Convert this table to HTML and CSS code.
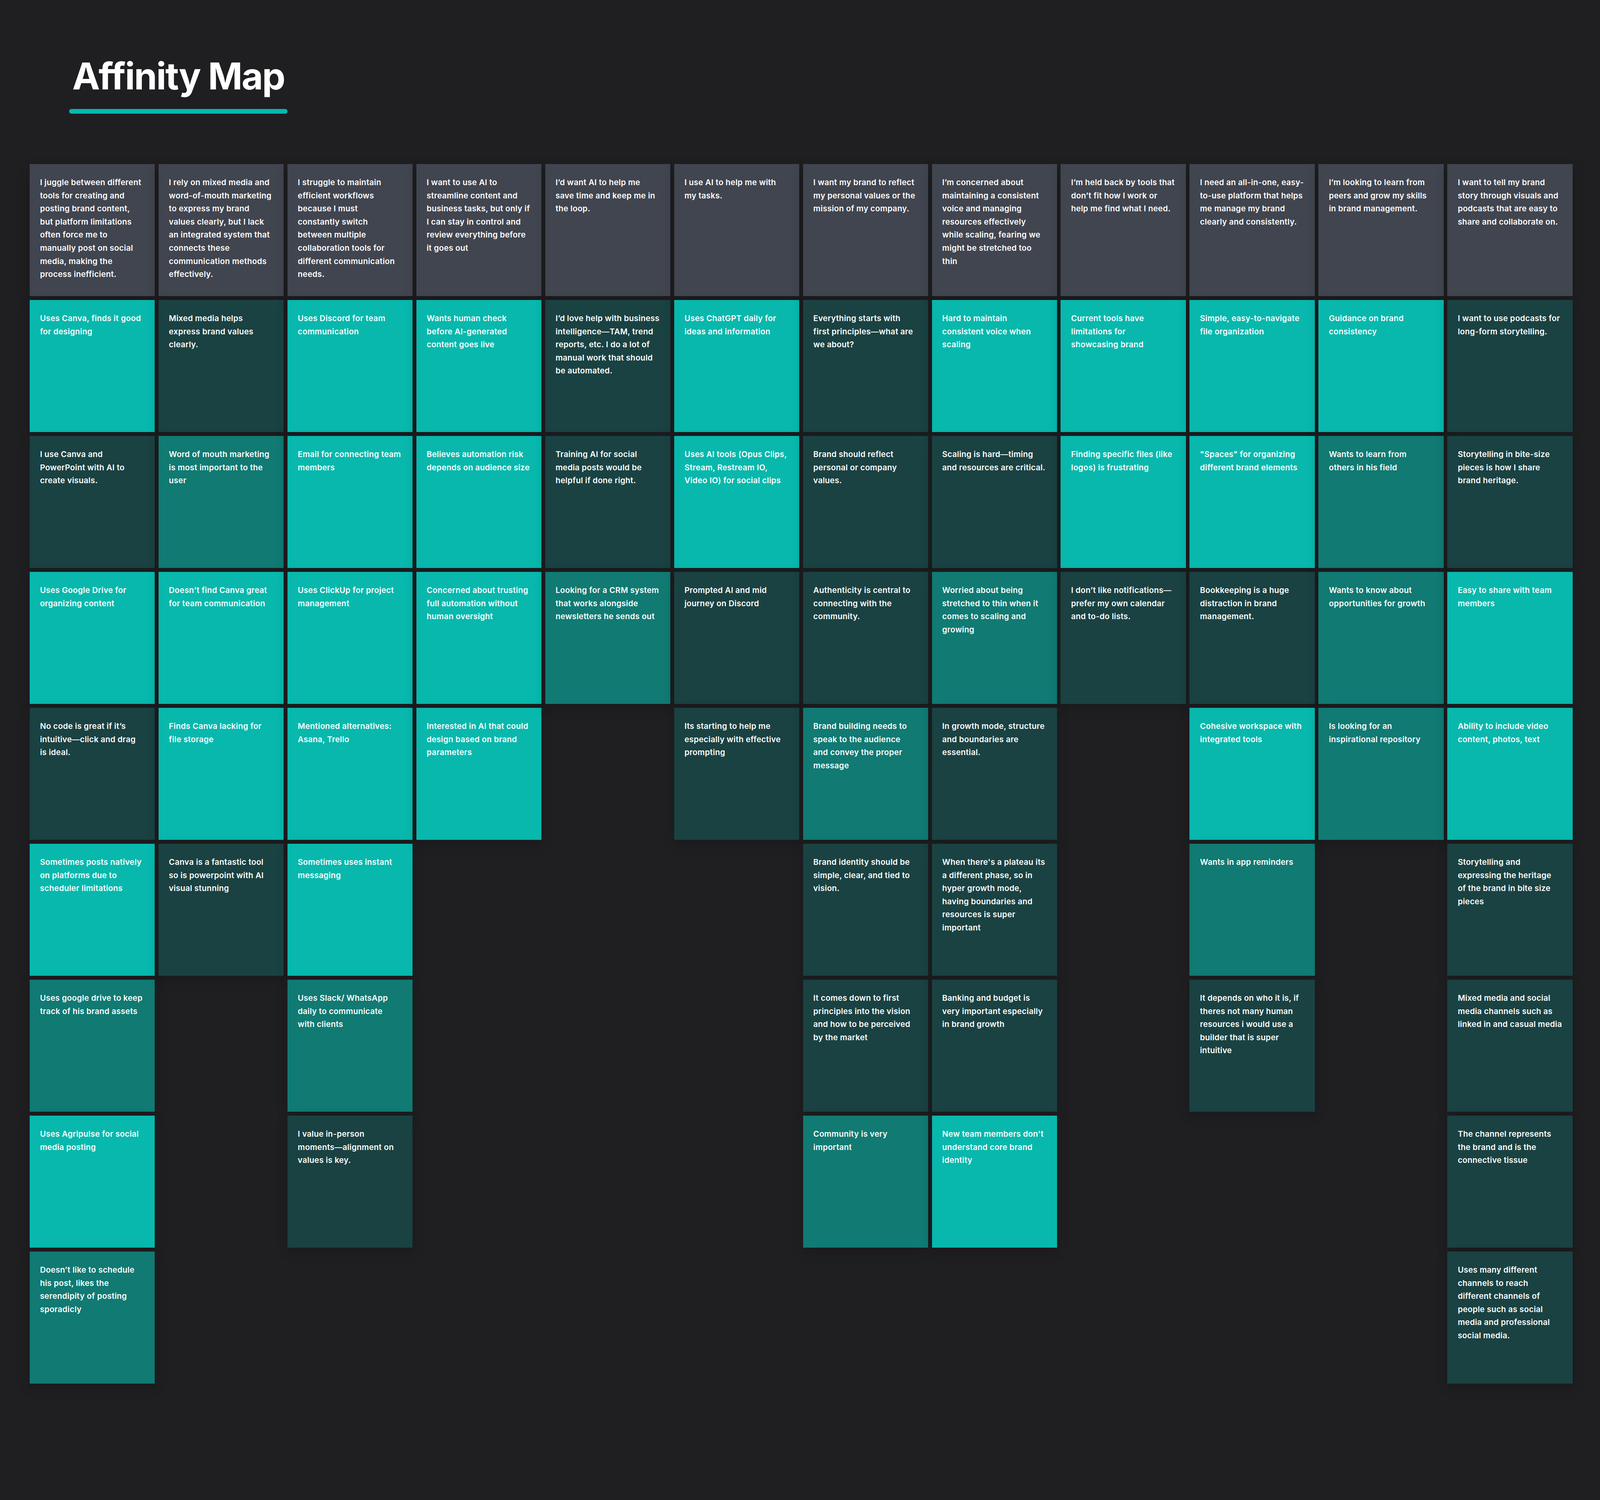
FILE: index.html
```html
<!DOCTYPE html>
<html lang="en">
<head>
<meta charset="utf-8">
<title>Affinity Map</title>
<link rel="stylesheet" href="styles.css">
</head>
<body>
<header class="page-header">
  <h1 class="title">Affinity Map</h1>
  <div class="title-rule"></div>
</header>
<main class="board">
  <section class="column">
    <div class="card head">I juggle between different<br>tools for creating and<br>posting brand content,<br>but platform limitations<br>often force me to<br>manually post on social<br>media, making the<br>process inefficient.</div>
    <div class="card bright">Uses Canva, finds it good<br>for designing</div>
    <div class="card dark">I use Canva and<br>PowerPoint with AI to<br>create visuals.</div>
    <div class="card bright">Uses Google Drive for<br>organizing content</div>
    <div class="card dark">No code is great if it’s<br>intuitive—click and drag<br>is ideal.</div>
    <div class="card bright">Sometimes posts natively<br>on platforms due to<br>scheduler limitations</div>
    <div class="card mid">Uses google drive to keep<br>track of his brand assets</div>
    <div class="card bright">Uses Agripulse for social<br>media posting</div>
    <div class="card mid">Doesn’t like to schedule<br>his post, likes the<br>serendipity of posting<br>sporadicly</div>
  </section>
  <section class="column">
    <div class="card head">I rely on mixed media and<br>word-of-mouth marketing<br>to express my brand<br>values clearly, but I lack<br>an integrated system that<br>connects these<br>communication methods<br>effectively.</div>
    <div class="card dark">Mixed media helps<br>express brand values<br>clearly.</div>
    <div class="card mid">Word of mouth marketing<br>is most important to the<br>user</div>
    <div class="card bright">Doesn't find Canva great<br>for team communication</div>
    <div class="card bright">Finds Canva lacking for<br>file storage</div>
    <div class="card dark">Canva is a fantastic tool<br>so is powerpoint with AI<br>visual stunning</div>
  </section>
  <section class="column">
    <div class="card head">I struggle to maintain<br>efficient workflows<br>because I must<br>constantly switch<br>between multiple<br>collaboration tools for<br>different communication<br>needs.</div>
    <div class="card bright">Uses Discord for team<br>communication</div>
    <div class="card bright">Email for connecting team<br>members</div>
    <div class="card bright">Uses ClickUp for project<br>management</div>
    <div class="card bright">Mentioned alternatives:<br>Asana, Trello</div>
    <div class="card bright">Sometimes uses instant<br>messaging</div>
    <div class="card mid">Uses Slack/ WhatsApp<br>daily to communicate<br>with clients</div>
    <div class="card dark">I value in-person<br>moments—alignment on<br>values is key.</div>
  </section>
  <section class="column">
    <div class="card head">I want to use AI to<br>streamline content and<br>business tasks, but only if<br>I can stay in control and<br>review everything before<br>it goes out</div>
    <div class="card bright">Wants human check<br>before AI-generated<br>content goes live</div>
    <div class="card bright">Believes automation risk<br>depends on audience size</div>
    <div class="card bright">Concerned about trusting<br>full automation without<br>human oversight</div>
    <div class="card bright">Interested in AI that could<br>design based on brand<br>parameters</div>
  </section>
  <section class="column">
    <div class="card head">I’d want AI to help me<br>save time and keep me in<br>the loop.</div>
    <div class="card dark">I’d love help with business<br>intelligence—TAM, trend<br>reports, etc. I do a lot of<br>manual work that should<br>be automated.</div>
    <div class="card dark">Training AI for social<br>media posts would be<br>helpful if done right.</div>
    <div class="card mid">Looking for a CRM system<br>that works alongside<br>newsletters he sends out</div>
  </section>
  <section class="column">
    <div class="card head">I use AI to help me with<br>my tasks.</div>
    <div class="card bright">Uses ChatGPT daily for<br>ideas and information</div>
    <div class="card bright">Uses AI tools (Opus Clips,<br>Stream, Restream IO,<br>Video IO) for social clips</div>
    <div class="card dark">Prompted AI and mid<br>journey on Discord</div>
    <div class="card dark">Its starting to help me<br>especially with effective<br>prompting</div>
  </section>
  <section class="column">
    <div class="card head">I want my brand to reflect<br>my personal values or the<br>mission of my company.</div>
    <div class="card dark">Everything starts with<br>first principles—what are<br>we about?</div>
    <div class="card dark">Brand should reflect<br>personal or company<br>values.</div>
    <div class="card dark">Authenticity is central to<br>connecting with the<br>community.</div>
    <div class="card mid">Brand building needs to<br>speak to the audience<br>and convey the proper<br>message</div>
    <div class="card dark">Brand identity should be<br>simple, clear, and tied to<br>vision.</div>
    <div class="card dark">It comes down to first<br>principles into the vision<br>and how to be perceived<br>by the market</div>
    <div class="card mid">Community is very<br>important</div>
  </section>
  <section class="column">
    <div class="card head">I’m concerned about<br>maintaining a consistent<br>voice and managing<br>resources effectively<br>while scaling, fearing we<br>might be stretched too<br>thin</div>
    <div class="card bright">Hard to maintain<br>consistent voice when<br>scaling</div>
    <div class="card dark">Scaling is hard—timing<br>and resources are critical.</div>
    <div class="card mid">Worried about being<br>stretched to thin when it<br>comes to scaling and<br>growing</div>
    <div class="card dark">In growth mode, structure<br>and boundaries are<br>essential.</div>
    <div class="card dark">When there's a plateau its<br>a different phase, so in<br>hyper growth mode,<br>having boundaries and<br>resources is super<br>important</div>
    <div class="card dark">Banking and budget is<br>very important especially<br>in brand growth</div>
    <div class="card bright">New team members don't<br>understand core brand<br>identity</div>
  </section>
  <section class="column">
    <div class="card head">I’m held back by tools that<br>don’t fit how I work or<br>help me find what I need.</div>
    <div class="card bright">Current tools have<br>limitations for<br>showcasing brand</div>
    <div class="card bright">Finding specific files (like<br>logos) is frustrating</div>
    <div class="card dark">I don’t like notifications—<br>prefer my own calendar<br>and to-do lists.</div>
  </section>
  <section class="column">
    <div class="card head">I need an all-in-one, easy-<br>to-use platform that helps<br>me manage my brand<br>clearly and consistently.</div>
    <div class="card bright">Simple, easy-to-navigate<br>file organization</div>
    <div class="card bright">"Spaces" for organizing<br>different brand elements</div>
    <div class="card dark">Bookkeeping is a huge<br>distraction in brand<br>management.</div>
    <div class="card bright">Cohesive workspace with<br>integrated tools</div>
    <div class="card mid">Wants in app reminders</div>
    <div class="card dark">It depends on who it is, if<br>theres not many human<br>resources i would use a<br>builder that is super<br>intuitive</div>
  </section>
  <section class="column">
    <div class="card head">I’m looking to learn from<br>peers and grow my skills<br>in brand management.</div>
    <div class="card bright">Guidance on brand<br>consistency</div>
    <div class="card mid">Wants to learn from<br>others in his field</div>
    <div class="card mid">Wants to know about<br>opportunities for growth</div>
    <div class="card mid">Is looking for an<br>inspirational repository</div>
  </section>
  <section class="column">
    <div class="card head">I want to tell my brand<br>story through visuals and<br>podcasts that are easy to<br>share and collaborate on.</div>
    <div class="card dark">I want to use podcasts for<br>long-form storytelling.</div>
    <div class="card dark">Storytelling in bite-size<br>pieces is how I share<br>brand heritage.</div>
    <div class="card bright">Easy to share with team<br>members</div>
    <div class="card bright">Ability to include video<br>content, photos, text</div>
    <div class="card dark">Storytelling and<br>expressing the heritage<br>of the brand in bite size<br>pieces</div>
    <div class="card dark">Mixed media and social<br>media channels such as<br>linked in and casual media</div>
    <div class="card dark">The channel represents<br>the brand and is the<br>connective tissue</div>
    <div class="card dark">Uses many different<br>channels to reach<br>different channels of<br>people such as social<br>media and professional<br>social media.</div>
  </section>
</main>
</body>
</html>
```

FILE: styles.css
```css
/* Horizontal measures are proportional to a 4320px-wide canvas,
   vertical measures are fixed pixels. */
* {
  box-sizing: border-box;
}

html, body {
  margin: 0;
  padding: 0;
}

body {
  background: #1f1f22;
  min-height: 3840px;
  font-family: Inter, "Noto Sans", "Liberation Sans", sans-serif;
  color: #ffffff;
  overflow-x: hidden;
}

.page-header {
  display: flex;
  flex-direction: column;
  align-items: flex-start;
  padding: 145px 0 0 4.329vw;
}

.title {
  margin: 0;
  padding-left: 0.185vw;
  font-size: 2.3148vw;
  line-height: 100px;
  font-weight: 700;
  letter-spacing: -0.025em;
  color: #ffffff;
}

.title-rule {
  width: 13.634vw;
  height: 12px;
  margin-top: 34px;
  border-radius: 6px;
  background: #08b8ad;
}

.board {
  display: grid;
  grid-template-columns: repeat(12, minmax(0, 1fr));
  column-gap: 0.2315vw;
  align-items: start;
  padding: 0 1.713vw 0 1.852vw;
  margin-top: 129px;
}

.column {
  display: flex;
  flex-direction: column;
  gap: 10px;
}

.card {
  height: 338px;
  padding: 30px 0.648vw 28px;
  font-size: 0.4977vw;
  line-height: 33.6px;
  font-weight: 600;
  letter-spacing: 0.015em;
  white-space: nowrap;
  color: #ffffff;
  box-shadow: 0 10px 28px rgba(0, 0, 0, 0.18);
}

.head {
  background: #41454f;
}

.bright {
  background: #08b8ad;
}

.mid {
  background: #107a73;
}

.dark {
  background: #1a4242;
}
```
